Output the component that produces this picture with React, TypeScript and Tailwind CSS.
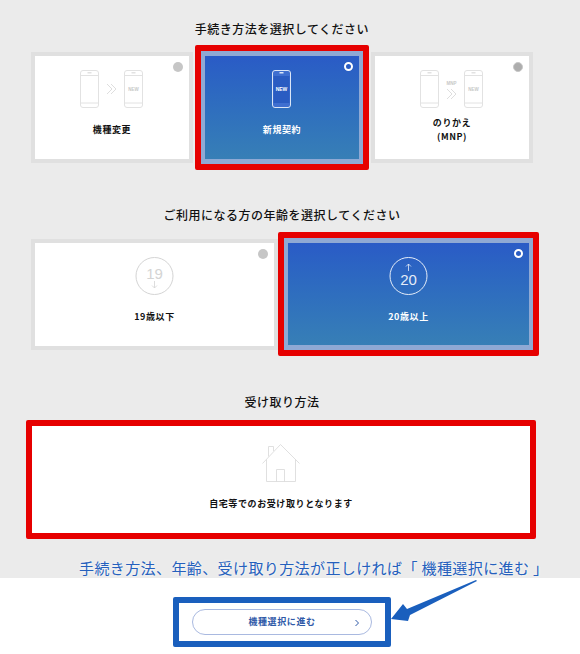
import React from 'react';

const FONT = 'font-["Noto_Sans_CJK_JP","Liberation_Sans",sans-serif]';

// single phone outline, used by the option icons
const Phone = ({ x, active, label }: { x: number; active?: boolean; label?: string }) => {
  const stroke = active ? '#dbe6f7' : '#e2e2e2';
  return (
    <g>
      <rect x={x + 0.5} y={0.5} width={18} height={37} rx={2.5} fill="none" stroke={stroke} strokeWidth={1} />
      <line x1={x + 1} y1={5.5} x2={x + 18} y2={5.5} stroke={stroke} />
      <line x1={x + 1} y1={33} x2={x + 18} y2={33} stroke={stroke} />
      <rect x={x + 7.5} y={2} width={4} height={1.5} fill={stroke} />
      {label && (
        <text
          x={x + 9.5}
          y={21}
          textAnchor="middle"
          fontSize={active ? 5 : 4.5}
          fontWeight={700}
          fill={active ? '#ffffff' : '#c8c8c8'}
          fontFamily="Liberation Sans, sans-serif"
        >
          {label}
        </text>
      )}
    </g>
  );
};

const Chevrons = ({ x, y }: { x: number; y: number }) => (
  <path
    d={`M${x} ${y}l5 5-5 5M${x + 4} ${y}l5 5-5 5`}
    fill="none"
    stroke="#d6d6d6"
    strokeWidth={0.8}
  />
);

const ChangeIcon = () => (
  <svg width={64} height={38} viewBox="0 0 64 38">
    <Phone x={0} />
    <Chevrons x={27} y={14} />
    <Phone x={44} label="NEW" />
  </svg>
);

const NewIcon = () => (
  <svg width={20} height={38} viewBox="0 0 20 38">
    <rect x={0.5} y={0.5} width={18} height={37} rx={2.5} fill="#3f6fd0" stroke="#dbe6f7" />
    <rect x={1.5} y={6} width={16} height={27} fill="#2a5cc2" />
    <rect x={7.5} y={2} width={4} height={1.5} fill="#dbe6f7" />
    <text x={9.5} y={21} textAnchor="middle" fontSize={5} fontWeight={700} fill="#ffffff" fontFamily="Liberation Sans, sans-serif">
      NEW
    </text>
  </svg>
);

const MnpIcon = () => (
  <svg width={64} height={38} viewBox="0 0 64 38">
    <Phone x={0} />
    <text x={31.5} y={15} textAnchor="middle" fontSize={4.5} fontWeight={700} fill="#c8c8c8" fontFamily="Liberation Sans, sans-serif">
      MNP
    </text>
    <Chevrons x={27} y={19} />
    <Phone x={44} label="NEW" />
  </svg>
);

const AgeIcon = ({ value, up }: { value: string; up?: boolean }) => {
  const color = up ? '#e4ecf8' : '#d4d4d4';
  return (
    <svg width={39} height={38} viewBox="0 0 39 38">
      <circle cx={19.5} cy={19} r={18.5} fill="none" stroke={color} />
      <text
        x={19.5}
        y={up ? 28 : 22}
        textAnchor="middle"
        fontSize={15}
        fill={color}
        fontFamily="Liberation Sans, sans-serif"
      >
        {value}
      </text>
      <path
        d={up ? 'M19.5 14V7M17 9.5l2.500-2.500 2.500 2.500' : 'M19.5 24v7M17 28.500l2.500 2.500 2.500-2.500'}
        fill="none"
        stroke={color}
        strokeWidth={0.8}
      />
    </svg>
  );
};

const HouseIcon = () => (
  <svg width={38} height={38} viewBox="0 0 38 38" fill="none" stroke="#d8d8d8" strokeWidth={0.8}>
    <path d="M0.5 19.500L18.500 0.500L37.500 19.500" />
    <path d="M6.500 12.500V2.500H11.500V7" />
    <path d="M4.500 15.500V37.500H33.500V15.500" />
    <path d="M14.500 37.500V25.500H22.500V37.500" />
  </svg>
);

const Radio = ({ selected, ring }: { selected?: boolean; ring?: boolean }) =>
  selected ? (
    <span className="absolute top-[6px] right-[6px] h-[9px] w-[9px] rounded-full border-[2px] border-white bg-[#2a5cc2]" />
  ) : (
    <span
      className={`absolute top-[6px] right-[6px] h-[10px] w-[10px] rounded-full ${ring ? 'border border-[#c8c8c8] bg-[#adadad]' : 'bg-[#c6c6c6]'}`}
    />
  );

const Label = ({ children, light }: { children: React.ReactNode; light?: boolean }) => (
  <div
    className={`mt-2 flex h-7 flex-col items-center justify-center text-center text-[9px] font-bold leading-[14px] tracking-[0.6px] ${light ? 'text-white' : 'text-[#111]'}`}
  >
    {children}
  </div>
);

const Option = ({ icon, children, width, ring }: { icon: React.ReactNode; children: React.ReactNode; width: string; ring?: boolean }) => (
  <div className={`${width} shrink-0 border-[4px] border-[#e0e0e0] h-[111px]`}>
    <div className="relative flex h-full flex-col items-center bg-white pt-[14px]">
      <Radio ring={ring} />
      <div className="h-[38px]">{icon}</div>
      <Label>{children}</Label>
    </div>
  </div>
);

const SelectedOption = ({ icon, children, width }: { icon: React.ReactNode; children: React.ReactNode; width: string }) => (
  <div className={`${width} shrink-0 rounded-[2px] border-[6px] border-[#e60000]`}>
    <div className="h-full border-x-[4px] border-y-[5px] border-[#8fa9d4]">
      <div className="relative flex h-full flex-col items-center bg-gradient-to-b from-[#2a5bc6] to-[#377fb6] pt-[14px]">
        <Radio selected />
        <div className="h-[38px]">{icon}</div>
        <Label light>{children}</Label>
      </div>
    </div>
  </div>
);

const Title = ({ children }: { children: React.ReactNode }) => (
  <h2 className="h-[18px] w-[502px] text-center text-[12px] font-medium leading-[18px] tracking-[0.5px] text-[#111]">
    {children}
  </h2>
);

export default function App() {
  return (
    <div className={`relative min-h-[654px] w-[580px] overflow-hidden bg-white ${FONT}`}>
      <div className="h-[578px] bg-[#ebebeb] pl-[31px] pt-5">
        <Title>手続き方法を選択してください</Title>
        <div className="mt-[7px] flex h-[125px] items-center gap-[2px]">
          <Option icon={<ChangeIcon />} width="w-[162px]">
            機種変更
          </Option>
          <SelectedOption icon={<NewIcon />} width="h-[125px] w-[174px]">
            新規契約
          </SelectedOption>
          <Option icon={<MnpIcon />} width="w-[162px]" ring>
            <span>のりかえ</span>
            <span>(MNP)</span>
          </Option>
        </div>

        <div className="mt-9">
          <Title>ご利用になる方の年齢を選択してください</Title>
        </div>
        <div className="mt-2 flex h-[124px] items-center">
          <Option icon={<AgeIcon value="19" />} width="w-[247px]">
            19歳以下
          </Option>
          <SelectedOption icon={<AgeIcon value="20" up />} width="h-[124px] w-[261px]">
            20歳以上
          </SelectedOption>
        </div>

        <div className="mt-[37px]">
          <Title>受け取り方法</Title>
        </div>
        <div className="ml-[-5px] mt-[9px] h-[119px] w-[510px] rounded-[2px] border-[6px] border-[#e60000] bg-white pt-[18px]">
          <div className="flex flex-col items-center">
            <HouseIcon />
            <div className="mt-2 flex h-7 items-center text-[9px] font-bold tracking-[0.6px] text-[#111]">
              自宅等でのお受け取りとなります
            </div>
          </div>
        </div>

        <p className="ml-[48px] mt-[18px] whitespace-nowrap text-[15px] leading-[21px] tracking-[0.4px] text-[#2560bd] [text-shadow:0_0_3px_#ffffff]">
          手続き方法、年齢、受け取り方法が正しければ「 機種選択に進む 」
        </p>
      </div>

      <div className="flex justify-start pl-[173px] pt-[19px]">
        <div className="flex h-[50px] w-[218px] items-center justify-center rounded-[2px] border-[6px] border-[#1a5fbd] bg-white">
          <button className="relative flex h-[26px] w-[180px] items-center justify-center rounded-full border border-[#a9b9e0] bg-white text-[9px] font-bold tracking-[0.6px] text-[#2f5aa8]">
            機種選択に進む
            <svg className="absolute right-[11px] top-[9px]" width={6} height={8} viewBox="0 0 6 8" fill="none" stroke="#2f5aa8" strokeWidth={1}>
              <path d="M1.500 1l3 3-3 3" />
            </svg>
          </button>
        </div>
      </div>

      {/* annotation arrow pointing at the button */}
      <svg className="absolute left-[385px] top-[575px]" width={100} height={55} viewBox="0 0 100 55">
        <path d="M6 44L18 29L22 34L91 5L92 6L25 40L23 46Z" fill="#1a5fbd" />
      </svg>
    </div>
  );
}
